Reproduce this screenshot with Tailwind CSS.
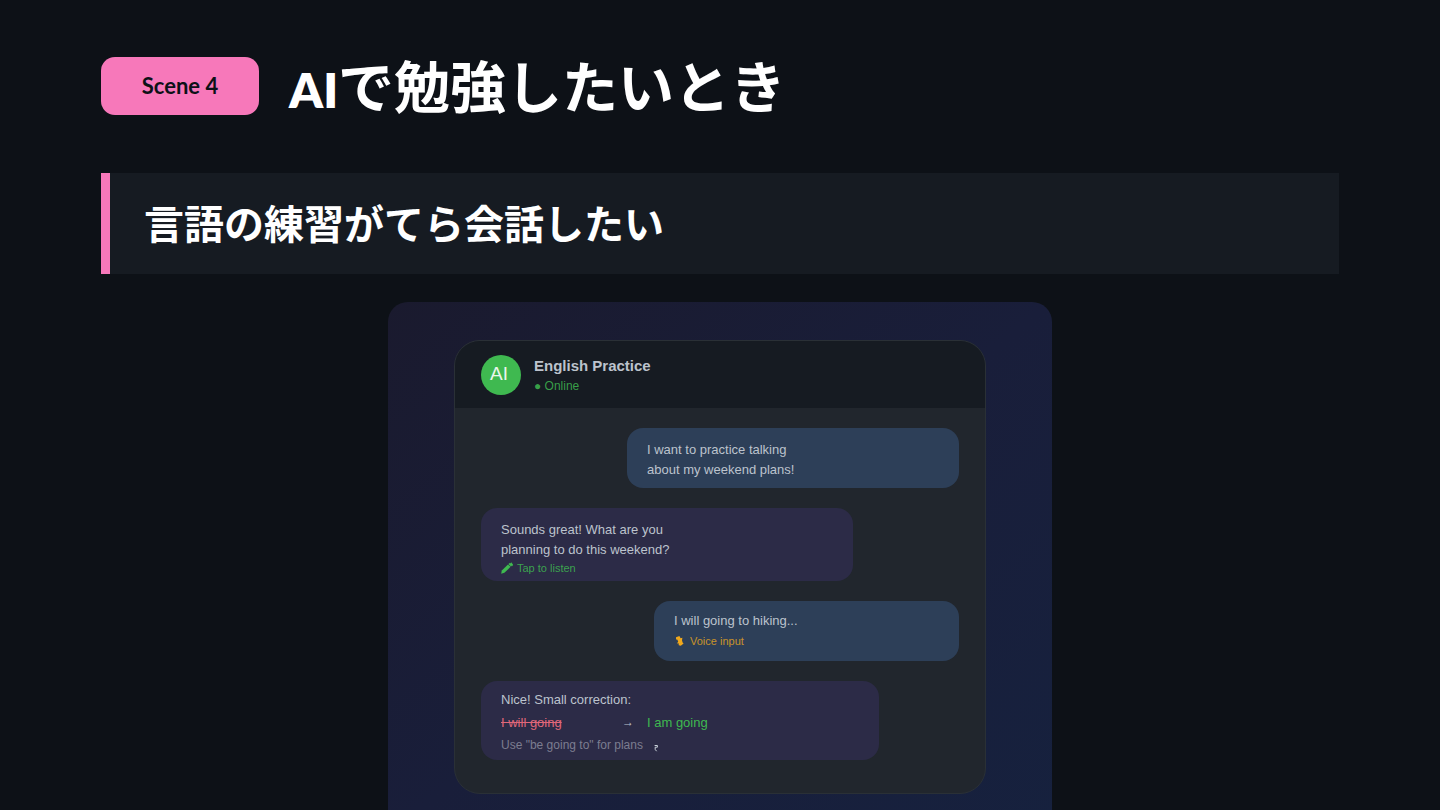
<!DOCTYPE html>
<html lang="ja">
<head>
    <meta charset="UTF-8">
    <meta name="viewport" content="width=device-width, initial-scale=1.0">
    <title>AIで勉強したいとき</title>
    <script src="https://cdn.jsdelivr.net/npm/@tailwindcss/browser@4"></script>
</head>
<body class="bg-[#0d1117] h-screen overflow-hidden text-white font-['Noto_Sans_CJK_JP',sans-serif]">
    <main class="px-[101px] pt-[57px]">
        <header class="flex items-center gap-[30px] h-[58px]">
            <span class="flex items-center justify-center w-[158px] h-[58px] pb-[2px] shrink-0 rounded-[14px] bg-[#f778ba] text-[#0d1117] text-[22px] font-bold font-['Lato',sans-serif]">Scene 4</span>
            <h1 class="pb-1 text-[56px] leading-[58px] font-bold whitespace-nowrap"><span class="text-5xl font-extrabold font-['Lato',sans-serif]">AI</span>で勉強したいとき</h1>
        </header>

        <h2 class="mt-[58px] h-[101px] flex items-center pl-[34px] pb-1 border-l-[9px] border-[#f778ba] bg-[#161b22] text-[40px] font-bold">言語の練習がてら会話したい</h2>

        <section class="mt-7 mx-auto w-full max-w-[664px] rounded-[20px] bg-linear-to-br from-[#1a1a2e] via-[#191e3a] to-[#16213e] px-[66px] pt-[38px] pb-10 font-['Liberation_Sans',sans-serif] text-[#bcc3cd]">
            <div class="rounded-[26px] border border-[#2a3036] bg-[#21262d] overflow-hidden">
                <!-- chat header -->
                <div class="flex items-center gap-[13px] h-[67px] px-[26px] bg-[#161b22]">
                    <div class="flex items-center justify-center size-10 pr-1 rounded-full bg-[#3fb950] text-[#eaf6ec] text-[19px]">AI</div>
                    <div class="pt-[2px]">
                        <h3 class="text-[15px] leading-5 font-bold">English Practice</h3>
                        <p class="text-xs leading-5 text-[#3fb950]/85">● Online</p>
                    </div>
                </div>

                <!-- messages -->
                <div class="flex flex-col gap-5 px-[26px] pt-5 pb-[33px] text-[13px] leading-5">
                    <div class="self-end w-[332px] h-[60px] rounded-[16px] bg-[#2d3f58] px-5 pt-3">
                        <p>I want to practice talking<br>about my weekend plans!</p>
                    </div>

                    <div class="w-[372px] h-[73px] rounded-[16px] bg-[#2c2b47] px-5 pt-3">
                        <p>Sounds great! What are you<br>planning to do this weekend?</p>
                        <button class="flex items-center gap-1 text-[11px] leading-4 text-[#3fb950]/85">
                            <svg class="size-3" viewBox="0 0 12 12" fill="#3fb950">
                                <path d="M0.2 11.8L0.8 8.6L7 2.4L9.6 4.8L3.4 10.8Z" />
                                <path d="M7.4 2L9 0.8L9.6 1.4L10.2 0.2L12 2.4L11.6 4.2L11 3.4L10 4.4Z" />
                            </svg>
                            Tap to listen
                        </button>
                    </div>

                    <div class="self-end w-[305px] h-[60px] rounded-[16px] bg-[#2d3f58] px-5 pt-[10px]">
                        <p>I will going to hiking...</p>
                        <button class="flex items-center gap-1 text-[11px] leading-5 text-[#c8932a]">
                            <svg class="size-3" viewBox="0 0 12 12" fill="#f0a81c">
                                <path d="M2 2.2L5.4 1L6.6 3.2L8.4 2.8L8 5.2L8.6 7.4L9.6 8.4L6.8 10.8L4.8 10.2L4.6 8.2L3 8.6L4.2 6.4L3.2 4.6L2 4.4Z" />
                            </svg>
                            Voice input
                        </button>
                    </div>

                    <div class="w-[398px] h-[79px] rounded-[16px] bg-[#2c2b47] px-5 pt-[7px]">
                        <p class="leading-[23px]">Nice! Small correction:</p>
                        <p class="flex leading-[23px]">
                            <del class="w-[121px] text-[#e0677a]">I will going</del>
                            <span class="w-[25px] text-xs leading-[23px]">→</span>
                            <span class="text-[#3fb950]">I am going</span>
                        </p>
                        <p class="flex items-center gap-[11px] text-xs leading-[23px] text-[#7c7d90]">
                            Use "be going to" for plans
                            <svg class="w-[4px] h-[8px] mt-1" viewBox="0 0 4 8" fill="none" stroke="#c9d1d9" stroke-width="1">
                                <path d="M0.6 1.5H3.4V3.2M3.4 3.2H1.2V5.4L2.6 7.2" />
                            </svg>
                        </p>
                    </div>
                </div>
            </div>
        </section>
    </main>
</body>
</html>
